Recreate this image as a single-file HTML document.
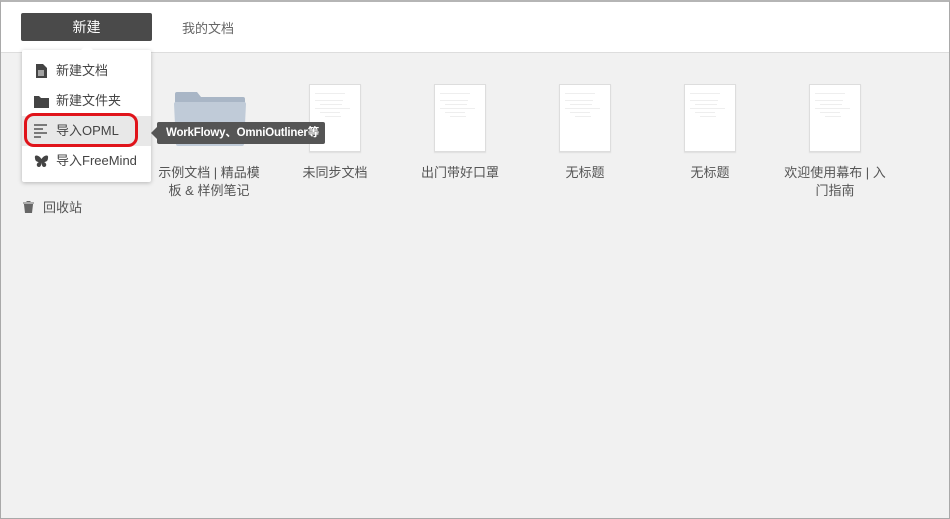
<!DOCTYPE html>
<html><head><meta charset="utf-8"><style>
*{margin:0;padding:0;box-sizing:border-box}
body{width:950px;height:519px;background:#f1f1f1;font-family:"Liberation Sans","Noto Sans CJK SC",sans-serif;position:relative;overflow:hidden;border:1px solid #a9a9a9;border-top:2px solid #b5b5b5}
.hdr{position:absolute;left:0;top:0;width:948px;height:51px;background:#fff;border-bottom:1px solid #ddd}
.btn{position:absolute;left:20px;top:11px;width:131px;height:28px;background:#4a4a4a;border-radius:2px;color:#fff;font-size:14px;text-align:center;line-height:28px}
.tab{position:absolute;left:181px;top:16px;font-size:13px;color:#666}
.menu{position:absolute;left:21px;top:48px;width:129px;height:132px;background:#fff;box-shadow:0 1px 4px rgba(0,0,0,.25);border-radius:2px}
.menu:before{content:"";position:absolute;left:59px;top:-6px;border:6px solid transparent;border-top:0;border-bottom-color:#fff}
.it{position:absolute;left:0;width:129px;height:30px;font-size:13px;color:#444;line-height:30px;padding-left:34px;white-space:nowrap}
.it svg{position:absolute;left:12px;top:8px}
.hl{background:#e8e8e8}
.red{position:absolute;left:2px;top:63px;width:114px;height:34px;border:3px solid #e0141b;border-radius:10px}
.tip{position:absolute;left:156px;top:120px;width:168px;height:22px;background:#555;color:#fff;font-size:11.5px;font-weight:bold;line-height:22px;padding-left:9px;border-radius:2px;white-space:nowrap;letter-spacing:-.2px}
.tip:before{content:"";position:absolute;left:-6px;top:5px;border:6px solid transparent;border-left:0;border-right-color:#555}
.trash{position:absolute;left:22px;top:195px;font-size:13px;color:#555}
.doc{position:absolute;top:82px;width:52px;height:68px;background:#fff;border:1px solid #ddd;box-shadow:0 1px 1px rgba(0,0,0,.08)}
.doc i{position:absolute;left:5px;height:1px;background:#eee}
.lbl{position:absolute;width:120px;text-align:center;font-size:13px;color:#555;line-height:18px;top:162px}
</style></head><body>
<div class="hdr"></div>
<div class="btn">新建</div>
<div class="tab">我的文档</div>

<svg style="position:absolute;left:172px;top:88px" width="74" height="58" viewBox="0 0 74 58"><path d="M4 2h20l4 5h42a2 2 0 0 1 2 2v44H2V4a2 2 0 0 1 2-2z" fill="#a9b6c6"/><path d="M3 12h68a2 2 0 0 1 2 2l-2 40a2 2 0 0 1-2 2H5a2 2 0 0 1-2-2L1 14a2 2 0 0 1 2-2z" fill="#c0cbd8"/></svg>
<div class="lbl" style="left:148px">示例文档 | 精品模<br>板 &amp; 样例笔记</div>

<div class="doc" style="left:308px"><i style="top:8px;width:30px"></i><i style="top:15px;width:28px"></i><i style="top:19px;width:22px;left:10px"></i><i style="top:23px;width:35px"></i><i style="top:27px;width:20px;left:10px"></i><i style="top:31px;width:16px;left:15px"></i></div>
<div class="lbl" style="left:274px">未同步文档</div>
<div class="doc" style="left:433px"><i style="top:8px;width:30px"></i><i style="top:15px;width:28px"></i><i style="top:19px;width:22px;left:10px"></i><i style="top:23px;width:35px"></i><i style="top:27px;width:20px;left:10px"></i><i style="top:31px;width:16px;left:15px"></i></div>
<div class="lbl" style="left:399px">出门带好口罩</div>
<div class="doc" style="left:558px"><i style="top:8px;width:30px"></i><i style="top:15px;width:28px"></i><i style="top:19px;width:22px;left:10px"></i><i style="top:23px;width:35px"></i><i style="top:27px;width:20px;left:10px"></i><i style="top:31px;width:16px;left:15px"></i></div>
<div class="lbl" style="left:524px">无标题</div>
<div class="doc" style="left:683px"><i style="top:8px;width:30px"></i><i style="top:15px;width:28px"></i><i style="top:19px;width:22px;left:10px"></i><i style="top:23px;width:35px"></i><i style="top:27px;width:20px;left:10px"></i><i style="top:31px;width:16px;left:15px"></i></div>
<div class="lbl" style="left:649px">无标题</div>
<div class="doc" style="left:808px"><i style="top:8px;width:30px"></i><i style="top:15px;width:28px"></i><i style="top:19px;width:22px;left:10px"></i><i style="top:23px;width:35px"></i><i style="top:27px;width:20px;left:10px"></i><i style="top:31px;width:16px;left:15px"></i></div>
<div class="lbl" style="left:774px">欢迎使用幕布 | 入<br>门指南</div>

<div class="menu">
<div class="it" style="top:6px"><svg width="14" height="14"><path d="M2 0h7l4 4v10H2z" fill="#444"/><path d="M4 7h6M4 9h6M4 11h6" stroke="#fff"/></svg>新建文档</div>
<div class="it" style="top:36px"><svg width="15" height="14"><path d="M0 2h5l2 2h8v10H0z" fill="#444"/></svg>新建文件夹</div>
<div class="it hl" style="top:66px"><svg width="15" height="14"><path d="M0 1h13M0 5h9M0 9h13M0 13h7" stroke="#555" stroke-width="1.5"/></svg>导入OPML</div>
<div class="it" style="top:96px"><svg width="15" height="14"><path d="M7.5 5C5 1 0 0 1 4c0 3 2 4 4 4C2 9 2 13 5 13c2 0 2.5-3 2.5-5 0 2 .5 5 2.5 5 3 0 3-4 0-5 2 0 4-1 4-4 1-4-4-3-6.5 1z" fill="#444"/></svg>导入FreeMind</div>
<div class="red"></div>
</div>
<div class="tip">WorkFlowy、OmniOutliner等</div>
<div class="trash"><svg width="11" height="12" style="vertical-align:-1px;margin-right:9px"><path d="M0 2h11M4 1V0h3v1M1.5 3.5h8l-1 8.5h-6z" fill="#666" stroke="#666"/></svg>回收站</div>
</body></html>
